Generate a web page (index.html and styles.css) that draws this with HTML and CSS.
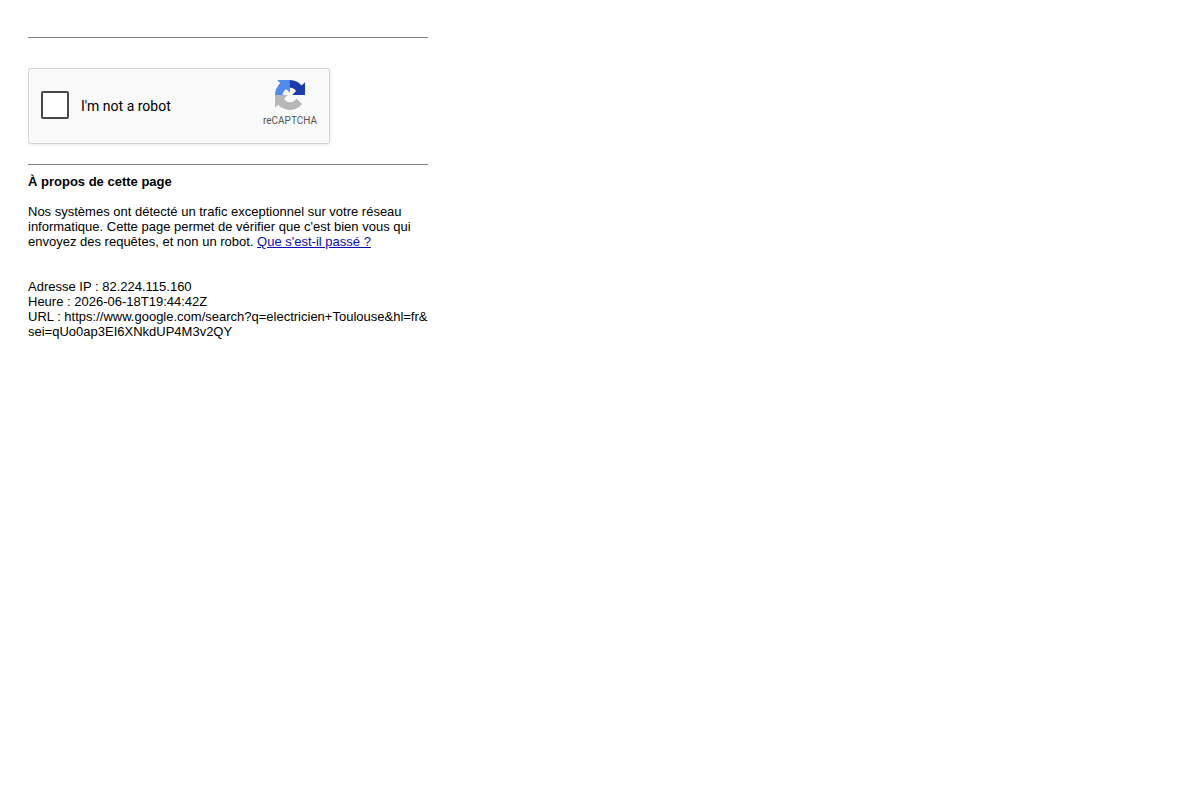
FILE: index.html
```html
<!DOCTYPE html>
<html lang="fr">
<head>
    <meta charset="UTF-8">
    <meta name="viewport" content="width=device-width, initial-scale=1.0">
    <title>Vérification</title>
    <link rel="stylesheet" href="styles.css">
</head>

<body>
    <main class="content">
        <hr>

        <form class="captcha" id="captcha-form">
            <input type="checkbox" id="robot-check" name="robot-check">
            <label for="robot-check">I'm not a robot</label>
            <div class="captcha-brand">
                <svg class="captcha-logo" viewBox="0 0 64 64" aria-hidden="true">
                    <path fill="#1c3aa9" d="M64 31.955l-.033-1.37V4.687l-7.16 7.16C50.948 4.674 42.033.093 32.05.093c-10.4 0-19.622 4.96-25.458 12.64l11.736 11.86a15.55 15.55 0 0 1 4.754-5.334c2.05-1.6 4.952-2.906 8.968-2.906.485 0 .86.057 1.135.163 4.976.393 9.288 3.14 11.828 7.124l-8.307 8.307L64 31.953"/>
                    <path fill="#4e8bec" d="M31.862.094l-1.37.033H4.594l7.16 7.16C4.58 13.147 0 22.06 0 32.046c0 10.4 4.96 19.622 12.64 25.458L24.5 45.768a15.55 15.55 0 0 1-5.334-4.754c-1.6-2.05-2.906-4.952-2.906-8.968 0-.485.057-.86.163-1.135.393-4.976 3.14-9.288 7.124-11.828l8.307 8.307L31.86.095"/>
                    <path fill="#b7b7b7" d="M.001 32.045l.033 1.37v25.898l7.16-7.16c5.86 7.173 14.774 11.754 24.76 11.754 10.4 0 19.622-4.96 25.458-12.64l-11.736-11.86a15.55 15.55 0 0 1-4.754 5.334c-2.05 1.6-4.952 2.906-8.968 2.906-.485 0-.86-.057-1.135-.163-4.976-.393-9.288-3.14-11.828-7.124l8.307-8.307c-10.522.04-22.4.066-27.295-.005"/>
                </svg>
                <span class="captcha-name">reCAPTCHA</span>
            </div>
        </form>

        <hr>

        <div class="about">
            <b>À propos de cette page</b>
            <p>Nos systèmes ont détecté un trafic exceptionnel sur votre réseau informatique. Cette page permet de vérifier que c'est bien vous qui envoyez des requêtes, et non un robot. <a href="#">Que s'est-il passé ?</a></p>
            <div class="details">
                Adresse IP : 82.224.115.160<br>
                Heure : 2026-06-18T19:44:42Z<br>
                URL : https://www.google.com/search?q=electricien+Toulouse&amp;hl=fr&amp;<wbr>sei=qUo0ap3EI6XNkdUP4M3v2QY
            </div>
        </div>
    </main>
</body>
</html>
```

FILE: styles.css
```css
body {
    font-family: "Liberation Sans", Arial, sans-serif;
    font-size: 13px;
    line-height: 15px;
    color: #000;
    background-color: #fff;
    margin: 0;
    padding: 37px 28px 20px;
}

.content {
    max-width: 400px;
}

hr {
    height: 1px;
    margin: 0;
    border: none;
    background-color: #808080;
}

.captcha {
    display: flex;
    align-items: flex-start;
    box-sizing: border-box;
    max-width: 302px;
    margin: 30px 0 20px;
    padding: 10px 12px 16px 12px;
    background-color: #f9f9f9;
    border: 1px solid #d3d3d3;
    border-radius: 3px;
    box-shadow: 0 0 4px 1px rgba(0, 0, 0, 0.08);
    /* shadow only shows on the right and bottom */
    clip-path: inset(0 -2px -2px 0);
}

.captcha input {
    appearance: none;
    box-sizing: border-box;
    width: 28px;
    height: 28px;
    margin: 12px 0 0;
    background-color: #fff;
    border: 2px solid #484848;
    border-radius: 2px;
    cursor: pointer;
}

.captcha input:checked {
    background-color: #4285f4;
}

.captcha label {
    flex: 1;
    margin: 12px 0 0 12px;
    font-family: Roboto, sans-serif;
    font-size: 14px;
    line-height: 30px;
    cursor: pointer;
}

.captcha-brand {
    display: flex;
    flex-direction: column;
    align-items: center;
    color: #555;
}

.captcha-logo {
    width: 30px;
    height: 32px;
}

.captcha-name {
    margin-top: 4px;
    font-family: Roboto, sans-serif;
    font-size: 10px;
    line-height: 12px;
}

.about {
    margin-top: 9px;
}

.about p {
    margin: 15px 0 30px;
}

.about a {
    color: #0d0db5;
}

.details {
    overflow-wrap: break-word;
}
```
